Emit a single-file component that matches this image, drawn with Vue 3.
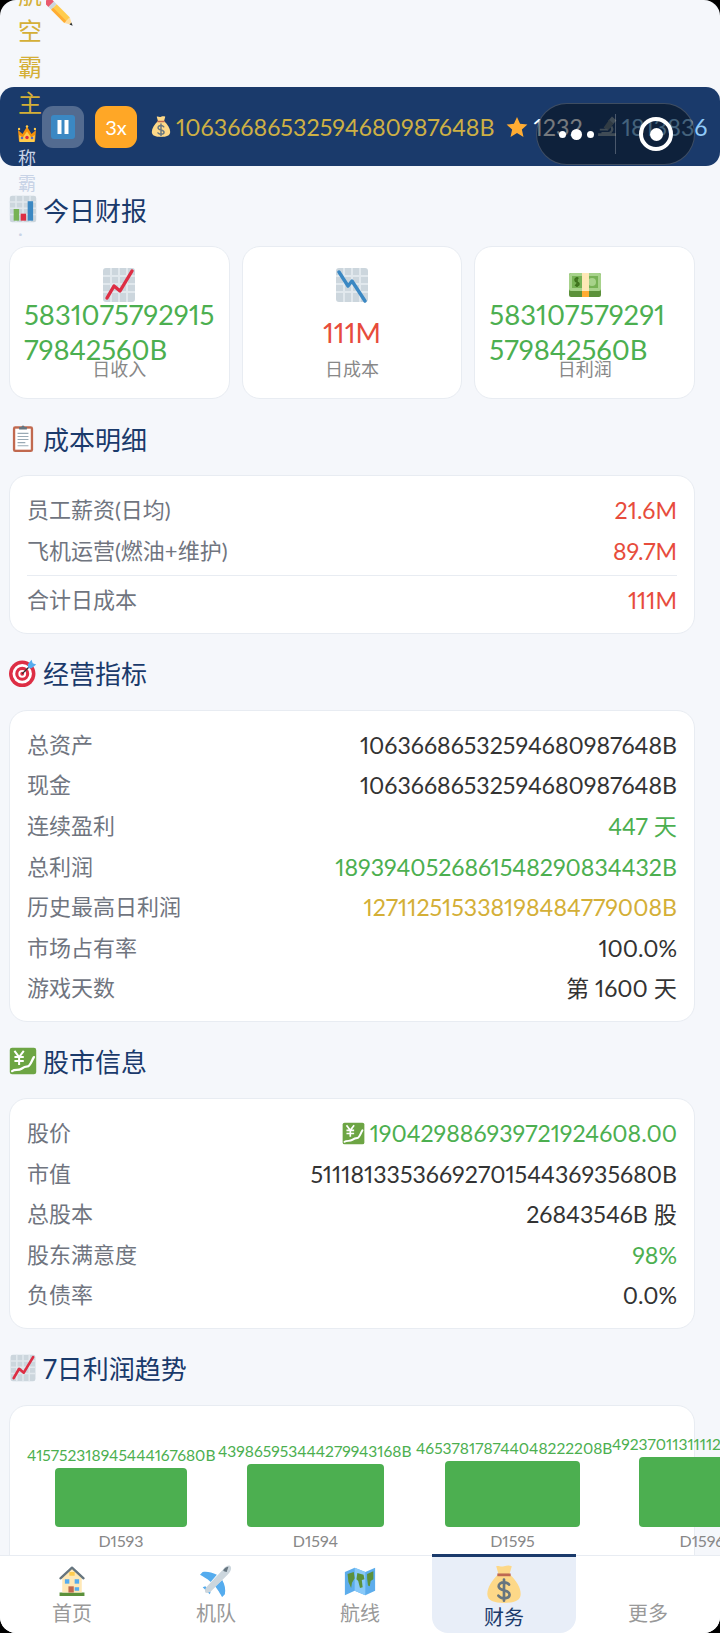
<template>
  <div class="screen">
    <svg class="sprite" aria-hidden="true">
      <symbol id="pencil" viewBox="0 0 36 36">
        <g transform="rotate(45 18 18)">
          <path fill="#ea596e" d="M-4 13h6v10h-6a2 2 0 0 1-2-2v-6a2 2 0 0 1 2-2z" />
          <rect x="2" y="13" width="5" height="10" fill="#ccd6dd" />
          <rect x="7" y="13" width="24" height="10" fill="#ffcc4d" />
          <rect x="7" y="19.500" width="24" height="3.500" fill="#ffac33" />
          <path fill="#ffdc9d" d="M31 13l9 5-9 5z" />
          <path fill="#292f33" d="M37 16.300l4 1.700-4 1.700z" />
        </g>
      </symbol>
      <symbol id="crown" viewBox="0 0 36 36">
        <path fill="#f4900c" d="M2 33L0 10l9 8 9-15 9 15 9-8-2 23z" />
        <path fill="#ffcc4d" d="M3 34l-.5-14 7 5 8.500-12 8.500 12 7-5L33 34z" />
        <circle cx="2" cy="8" r="2.500" fill="#ffcc4d" />
        <circle cx="18" cy="3" r="2.500" fill="#ffcc4d" />
        <circle cx="34" cy="8" r="2.500" fill="#ffcc4d" />
        <circle cx="18" cy="25" r="3.500" fill="#dd2e44" />
        <circle cx="8" cy="26" r="2.600" fill="#5c6bc0" />
        <circle cx="28" cy="26" r="2.600" fill="#5c6bc0" />
      </symbol>
      <symbol id="bag" viewBox="0 0 36 36">
        <path fill="#fdd888" d="M13 9C7 15 3 21 3 27c0 6 6 8 15 8s15-2 15-8c0-6-4-12-10-18z" />
        <path fill="#fdd888" d="M11 2c2-1 4 1 7 0s5-1 7 0l-2 7H13z" />
        <path fill="#bf6952" d="M12 8.500h12v2.500H12z" />
        <path fill="none" stroke="#67757f" stroke-width="2.400" stroke-linecap="round" d="M22.500 18.500c-1-1.500-2.500-2-4.500-2-3 0-4.800 1.500-4.800 3.500 0 5 9.800 2.500 9.800 7.500 0 2-2 3.300-5 3.300-2.200 0-3.900-.8-5-2.300M18 14v19" />
      </symbol>
      <symbol id="star" viewBox="0 0 36 36">
        <path fill="#ffac33" d="M18 1.500l5 11.200 12 1.300-9 8.200 2.600 12L18 28l-10.600 6.200 2.600-12-9-8.200 12-1.300z" />
      </symbol>
      <symbol id="scope" viewBox="0 0 36 36">
        <path fill="#8899a6" d="M2 30h32v5H2z" />
        <path fill="#8899a6" d="M20 8l7-8 8 7-7 8z" />
        <path fill="#66757f" d="M12 20L22 6l8 7-11 13z" />
        <path fill="none" stroke="#8899a6" stroke-width="4" d="M26 18c3 5 1 11-5 12H8" />
        <path fill="#8899a6" d="M5 22h14v3H5z" />
      </symbol>
      <symbol id="bars" viewBox="0 0 36 36">
        <rect x="1" y="1" width="34" height="34" rx="3" fill="#ccd6dd" />
        <path stroke="#e1e8ed" stroke-width="2" d="M1 9h34M1 17h34M1 25h34M9 1v34M18 1v34M27 1v34" />
        <rect x="6" y="18" width="7" height="15" fill="#77b255" />
        <rect x="15" y="24" width="7" height="9" fill="#dd2e44" />
        <rect x="24" y="8" width="7" height="25" fill="#3b88c3" />
      </symbol>
      <symbol id="up" viewBox="0 0 36 36">
        <rect x="2" y="1" width="32" height="34" rx="3" fill="#ccd6dd" />
        <path stroke="#e1e8ed" stroke-width="2" d="M2 9h32M2 17h32M2 25h32M10 1v34M18 1v34M26 1v34" />
        <path fill="none" stroke="#dd2e44" stroke-width="3.400" stroke-linecap="round" stroke-linejoin="round" d="M6 31l7-12 6 5L31 4" />
      </symbol>
      <symbol id="down" viewBox="0 0 36 36">
        <rect x="2" y="1" width="32" height="34" rx="3" fill="#ccd6dd" />
        <path stroke="#e1e8ed" stroke-width="2" d="M2 9h32M2 17h32M2 25h32M10 1v34M18 1v34M26 1v34" />
        <path fill="none" stroke="#3b88c3" stroke-width="3.400" stroke-linecap="round" stroke-linejoin="round" d="M5 5l9 14 4-5 13 20" />
      </symbol>
      <symbol id="money" viewBox="0 0 36 36">
        <rect x="2" y="6" width="32" height="24" rx="2" fill="#5c913b" />
        <rect x="2" y="6" width="32" height="18" rx="2" fill="#a7d28b" />
        <rect x="5" y="9" width="26" height="12" fill="#77b255" />
        <circle cx="25" cy="15" r="4" fill="#a7d28b" />
        <path fill="none" stroke="#3e721d" stroke-width="1.600" d="M11.500 11.500c-2-1-3.500 0-3.500 1.500 0 3 4 1.500 4 4 0 1.500-2 2-4 1M10 10v10" />
        <rect x="15" y="6" width="7" height="18" fill="#ffe8b6" />
        <rect x="15" y="24" width="7" height="6" fill="#ffac33" />
      </symbol>
      <symbol id="clip" viewBox="0 0 36 36">
        <rect x="5" y="3" width="26" height="33" rx="3" fill="#c1694f" />
        <rect x="8" y="6" width="20" height="27" fill="#fff" />
        <path stroke="#99aab5" stroke-width="1.400" d="M11 12h14M11 16h14M11 20h14M11 24h10M11 28h14" />
        <path fill="#66757f" d="M13 7V4h3a2 2 0 0 1 4 0h3v3z" />
      </symbol>
      <symbol id="target" viewBox="0 0 36 36">
        <circle cx="17" cy="19" r="17" fill="#dd2e44" />
        <circle cx="17" cy="19" r="12.500" fill="#fff" />
        <circle cx="17" cy="19" r="9" fill="#dd2e44" />
        <circle cx="17" cy="19" r="5" fill="#fff" />
        <circle cx="17" cy="19" r="2.500" fill="#dd2e44" />
        <path stroke="#292f33" stroke-width="1.500" d="M17 19l9-9" />
        <path fill="#55acee" d="M24 7l5-6 1.500 4.500L35 7l-6 5h-4z" />
      </symbol>
      <symbol id="yen" viewBox="0 0 36 36">
        <rect x="1" y="1" width="34" height="34" rx="3" fill="#6da544" />
        <path fill="none" stroke="#fff" stroke-width="2.600" d="M7 5l6 8 6-8M13 13v10M7 13h12M7 18h12" />
        <path fill="none" stroke="#fff" stroke-width="3" stroke-linecap="round" d="M4 31c4-3 8 0 12-3s5-3 8-3 5-7 8-12" />
      </symbol>
      <symbol id="house" viewBox="0 0 36 36">
        <path fill="#5c913b" d="M4 31h28v4H4z" />
        <path fill="#ffe8b6" d="M7 13L18 3l11 10v18H7z" />
        <path fill="none" stroke="#66757f" stroke-width="2.600" stroke-linecap="round" stroke-linejoin="round" d="M5 15L18 3l13 12" />
        <path fill="#ffcc4d" d="M15 8h6v4h-6z" />
        <rect x="10" y="16" width="5" height="5" fill="#55acee" />
        <rect x="21" y="16" width="5" height="5" fill="#55acee" />
        <rect x="21" y="25" width="5" height="4" fill="#55acee" />
        <rect x="14" y="24" width="6" height="7" fill="#c1694f" />
      </symbol>
      <symbol id="plane" viewBox="0 0 36 36">
        <path fill="#55acee" d="M0 11l3-3c4-1 10 0 16 3l-7 8C8 15 3 13 0 11z" />
        <path fill="#55acee" d="M25 17l-8 7c4 5 7 11 8 12l3-3c1-5 0-11-3-16z" />
        <path fill="#55acee" d="M3 25l3-1 6 6-1 3z" />
        <path fill="#ccd6dd" d="M34 1c2 2 1 6-3 10L13 29c-2 2-5 3-7 2-1-2 0-5 2-7L26 5c3-4 6-5 8-4z" />
        <path fill="#66757f" d="M30 8l-3-1-1-1c1-2 4-4 6-4z" />
      </symbol>
      <symbol id="map" viewBox="0 0 36 36">
        <path fill="#5dadec" d="M1 8l11-5 12 5 11-5v26l-11 5-12-5-11 5z" />
        <path fill="#88c9f9" d="M12 3l12 5v26l-12-5z" />
        <path fill="#5c913b" d="M4 10l7-2 1 7-3 5-1 6-3-7zM15 9l7 2 1 5-3 1 1 8-3 1-2-8-2-2zM26 10l7-3v9l-3 2-1 6-2-1-1-8z" />
      </symbol>
    </svg>

    <header class="topbar">
      <div class="who">
        <div class="who-name">航空霸主</div>
        <svg class="who-crown"><use href="#crown" /></svg>
        <div class="who-rank">称霸<br /><br />·</div>
        <svg class="who-edit"><use href="#pencil" /></svg>
      </div>
      <button class="ctl ctl-pause">
        <svg viewBox="0 0 24 24" width="24" height="24">
          <rect width="24" height="24" rx="3" fill="#3b88c3" />
          <rect x="6.500" y="5" width="4" height="14" fill="#fff" />
          <rect x="13.500" y="5" width="4" height="14" fill="#fff" />
        </svg>
      </button>
      <button class="ctl ctl-speed">3x</button>
      <div class="stats">
        <svg class="stat-icon bag-icon"><use href="#bag" /></svg>
        <span class="cash">10636686532594680987648B</span>
        <svg class="stat-icon star-icon"><use href="#star" /></svg>
        <span class="rep">1232</span>
        <svg class="stat-icon scope-icon"><use href="#scope" /></svg>
        <span class="tech">1813836</span>
      </div>
    </header>

    <div class="capsule">
      <div class="dots"><i></i><i class="big"></i><i></i></div>
      <div class="capsule-line"></div>
      <div class="rec"><i></i></div>
    </div>

    <main class="page">
      <h2 class="sec-title"><svg><use href="#bars" /></svg>今日财报</h2>
      <div class="day-cards">
        <div v-for="c in dayCards" :key="c.label" class="day-card">
          <svg class="day-icon"><use :href="'#' + c.icon" /></svg>
          <div class="day-value" :class="c.color">
            <div :class="{ wrapped: c.lines.length > 1 }">
              <div v-for="l in c.lines" :key="l">{{ l }}</div>
            </div>
          </div>
          <div class="day-label">{{ c.label }}</div>
        </div>
      </div>

      <template v-for="s in sections" :key="s.title">
        <h2 class="sec-title"><svg><use :href="'#' + s.icon" /></svg>{{ s.title }}</h2>
        <div class="card">
          <div v-for="r in s.rows" :key="r.k" class="row" :class="{ total: r.total }">
            <span class="row-k">{{ r.k }}</span>
            <span class="row-v" :class="r.color">
              <svg v-if="r.icon" class="row-icon"><use :href="'#' + r.icon" /></svg>{{ r.v }}
            </span>
          </div>
        </div>
      </template>

      <h2 class="sec-title"><svg><use href="#up" /></svg>7日利润趋势</h2>
      <div class="card chart">
        <div v-for="d in days" :key="d.day" class="col" :style="{ width: d.w + 'px' }">
          <div class="col-value">{{ d.value }}</div>
          <div class="col-bar" :style="{ height: d.h + 'px' }"></div>
          <div class="col-day">{{ d.day }}</div>
        </div>
      </div>
    </main>

    <nav class="tabs">
      <div v-for="t in tabs" :key="t.label" class="tab" :class="{ active: t.active }">
        <svg v-if="t.icon" class="tab-icon"><use :href="'#' + t.icon" /></svg>
        <div v-else class="tab-icon"></div>
        <div class="tab-label">{{ t.label }}</div>
      </div>
    </nav>
  </div>
</template>

<script setup>
const dayCards = [
  { icon: 'up', lines: ['5831075792915', '79842560B'], label: '日收入', color: 'green' },
  { icon: 'down', lines: ['111M'], label: '日成本', color: 'red' },
  { icon: 'money', lines: ['583107579291', '579842560B'], label: '日利润', color: 'green' }
]

const sections = [
  {
    title: '成本明细',
    icon: 'clip',
    rows: [
      { k: '员工薪资(日均)', v: '21.6M', color: 'red' },
      { k: '飞机运营(燃油+维护)', v: '89.7M', color: 'red' },
      { k: '合计日成本', v: '111M', color: 'red', total: true }
    ]
  },
  {
    title: '经营指标',
    icon: 'target',
    rows: [
      { k: '总资产', v: '10636686532594680987648B' },
      { k: '现金', v: '10636686532594680987648B' },
      { k: '连续盈利', v: '447 天', color: 'green' },
      { k: '总利润', v: '1893940526861548290834432B', color: 'green' },
      { k: '历史最高日利润', v: '127112515338198484779008B', color: 'gold' },
      { k: '市场占有率', v: '100.0%' },
      { k: '游戏天数', v: '第 1600 天' }
    ]
  },
  {
    title: '股市信息',
    icon: 'yen',
    rows: [
      { k: '股价', v: '190429886939721924608.00', color: 'green', icon: 'yen' },
      { k: '市值', v: '5111813353669270154436935680B' },
      { k: '总股本', v: '26843546B 股' },
      { k: '股东满意度', v: '98%', color: 'green' },
      { k: '负债率', v: '0.0%' }
    ]
  }
]

const days = [
  { day: 'D1593', value: '415752318945444167680B', h: 59, w: 188 },
  { day: 'D1594', value: '439865953444279943168B', h: 63, w: 195 },
  { day: 'D1595', value: '465378178744048222208B', h: 66, w: 193 },
  { day: 'D1596', value: '492370113111120117760B', h: 70, w: 180 }
]

const tabs = [
  { label: '首页', icon: 'house' },
  { label: '机队', icon: 'plane' },
  { label: '航线', icon: 'map' },
  { label: '财务', icon: 'bag', active: true },
  { label: '更多' }
]
</script>

<style>
html, body {
  margin: 0;
  background: #000;
  overflow: hidden;
}
</style>

<style scoped>
* {
  box-sizing: border-box;
}

.screen {
  position: relative;
  width: 720px;
  height: 1633px;
  overflow: hidden;
  border-radius: 16px;
  background: #f5f7fb;
  color: #333;
  font-family: Lato, "Noto Sans CJK SC", sans-serif;
  font-variant-numeric: proportional-nums;
}

.sprite {
  position: absolute;
  width: 0;
  height: 0;
}

.green { color: #4caf50; }
.red { color: #e74c3c; }
.gold { color: #d4af37; }

/* top bar */
.topbar {
  display: flex;
  align-items: center;
  height: 79px;
  margin-top: 87px;
  padding-left: 18px;
  background: #1a3a6b;
  border-radius: 14px;
  white-space: nowrap;
}

.who {
  position: relative;
  flex: none;
  width: 24px;
  margin-bottom: 31px;
  z-index: 2;
}

.who-name {
  font-size: 24px;
  line-height: 36px;
  color: #d4af37;
  white-space: normal;
}

.who-crown {
  display: block;
  width: 18px;
  height: 18px;
  margin: 4px 0 3px;
}

.who-rank {
  font-size: 18px;
  line-height: 25px;
  color: #c8d3e6;
  white-space: normal;
}

.who-edit {
  position: absolute;
  left: 28px;
  top: 22px;
  width: 28px;
  height: 28px;
}

.ctl {
  flex: none;
  display: flex;
  align-items: center;
  justify-content: center;
  width: 42px;
  height: 42px;
  border: none;
  padding: 0;
  border-radius: 11px;
  font-family: inherit;
}

.ctl-pause {
  background: rgba(255, 255, 255, 0.25);
}

.ctl-speed {
  margin-left: 11px;
  background: #ffa726;
  color: #fff;
  font-size: 20px;
}

.stats {
  display: flex;
  align-items: center;
  margin-left: 13px;
  font-size: 23.300px;
}

.stat-icon {
  flex: none;
}

.bag-icon { width: 22px; height: 23px; margin-right: 4px; }
.star-icon { width: 22px; height: 22px; margin: 0 6px 0 11px; }
.scope-icon { width: 20px; height: 21px; margin: 0 5px 0 14px; }

.cash { color: #cdb045; }
.rep { color: #fff; }
.tech { color: #90caf9; }

/* wechat capsule */
.capsule {
  position: absolute;
  left: 536px;
  top: 103px;
  display: flex;
  align-items: center;
  width: 159px;
  height: 62px;
  border-radius: 31px;
  background: rgba(5, 12, 20, 0.55);
  border: 1px solid rgba(255, 255, 255, 0.2);
}

.dots {
  display: flex;
  align-items: center;
  justify-content: center;
  gap: 5px;
  width: 78px;
}

.dots i {
  width: 7px;
  height: 7px;
  border-radius: 50%;
  background: #fff;
}

.dots i.big {
  width: 11px;
  height: 11px;
}

.capsule-line {
  width: 1px;
  height: 40px;
  background: rgba(255, 255, 255, 0.25);
}

.rec {
  display: flex;
  align-items: center;
  justify-content: center;
  width: 34px;
  height: 34px;
  margin-left: 23px;
  border: 4px solid #fff;
  border-radius: 50%;
}

.rec i {
  width: 13px;
  height: 13px;
  border-radius: 50%;
  background: #fff;
}

/* page */
.page {
  padding: 26px 25px 0 9px;
}

.sec-title {
  display: flex;
  align-items: center;
  gap: 6px;
  height: 34px;
  margin: 22px 0 20px;
  font-size: 26px;
  font-weight: 400;
  color: #1a3a6b;
}

.sec-title:first-child {
  margin-top: 0;
}

.sec-title svg {
  flex: none;
  width: 28px;
  height: 28px;
}

.day-cards {
  display: flex;
  gap: 12px;
  margin-bottom: 1px;
}

.day-card {
  flex: 1 1 0;
  min-width: 0;
  display: flex;
  flex-direction: column;
  align-items: center;
  height: 153px;
  padding: 20px 14px 0;
  background: #fff;
  border: 1px solid #e8ecf2;
  border-radius: 18px;
}

.day-icon {
  flex: none;
  width: 36px;
  height: 36px;
  margin-bottom: 5px;
}

.day-value {
  display: flex;
  align-items: center;
  justify-content: center;
  width: 100%;
  height: 48px;
  font-size: 27.400px;
  line-height: 35px;
  white-space: nowrap;
}

.wrapped {
  width: 100%;
}

.day-label {
  font-size: 18px;
  line-height: 26px;
  color: #888;
}

.card {
  padding: 14px 17px 12px;
  background: #fff;
  border: 1px solid #e8ecf2;
  border-radius: 18px;
}

.row {
  display: flex;
  justify-content: space-between;
  font-size: 22px;
  line-height: 40.6px;
  white-space: nowrap;
}

.row.total {
  margin-top: 4px;
  padding-top: 4px;
  border-top: 1px solid #e8ecf2;
}

.row-k {
  color: #70757f;
}

.row-v {
  font-size: 23.200px;
}

.row-icon {
  width: 23px;
  height: 23px;
  margin-right: 5px;
  vertical-align: -3px;
}

/* chart */
.chart {
  display: flex;
  align-items: flex-end;
  gap: 3px;
  height: 210px;
  padding: 0 0 63px 17px;
}

.col {
  flex: none;
  display: flex;
  flex-direction: column;
  align-items: center;
}

.col-value {
  align-self: flex-start;
  font-size: 15.600px;
  line-height: 20px;
  margin-bottom: 3px;
  color: #4caf50;
  white-space: nowrap;
}

.col-bar {
  width: 70%;
  background: #4caf50;
  border-radius: 4px;
}

.col-day {
  margin-top: 4px;
  font-size: 16px;
  line-height: 20px;
  color: #888;
}

/* bottom tabs */
.tabs {
  position: absolute;
  left: 0;
  right: 0;
  bottom: 0;
  display: flex;
  height: 78px;
  background: #fff;
  border-top: 1px solid #e8ecf2;
}

.tab {
  position: relative;
  flex: 1;
  display: flex;
  flex-direction: column;
  align-items: center;
  padding-top: 9px;
  color: #999;
}

.tab-icon {
  width: 32px;
  height: 32px;
  margin-bottom: 3px;
}

.tab-label {
  font-size: 20px;
  line-height: 26px;
}

.tab.active {
  margin-top: -2px;
  padding-top: 7px;
  background: #e8eef8;
  border-top: 3px solid #1a3a6b;
  border-radius: 0 0 16px 16px;
  color: #1a3a6b;
}

.tab.active .tab-icon {
  width: 40px;
  height: 40px;
  margin-bottom: 0;
}
</style>
